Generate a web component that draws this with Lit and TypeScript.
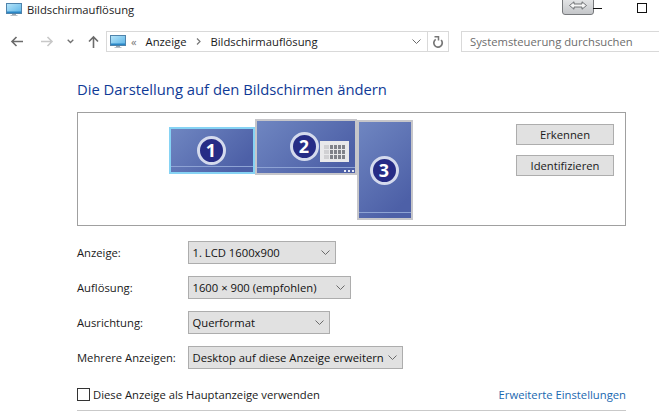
import { LitElement, html, css, svg } from "lit";
import { customElement } from "lit/decorators.js";

const monitorIcon = svg`<svg class="pc" width="16" height="14" viewBox="0 0 16 14">
  <defs><linearGradient id="scr" x1="0" y1="0" x2="1" y2="1"><stop offset="0" stop-color="#b8e6fa"/><stop offset="1" stop-color="#58b2e6"/></linearGradient></defs>
  <rect x="0.5" y="0.5" width="15" height="10" fill="url(#scr)" stroke="#4f83ab"/>
  <rect x="1" y="8.5" width="14" height="1.5" fill="#2a86c6"/>
  <rect x="6" y="11" width="4" height="1" fill="#9aa6b1"/>
  <rect x="4.5" y="12" width="7" height="1" fill="#b8c0c8"/>
</svg>`;

const chevron = svg`<svg class="chev" width="9" height="5" viewBox="0 0 9 5"><path d="M0.5 0.5 L4.5 4.5 L8.5 0.5" fill="none" stroke="#6a6a6a" stroke-width="1"/></svg>`;

@customElement("app-root")
export class AppRoot extends LitElement {
  static styles = css`
    :host { display: block; width: 659px; height: 414px; overflow: hidden; position: relative; background: #fff; color: #1a1a1a; font-family: "Open Sans", "Noto Sans", sans-serif; font-size: 11.25px; }
    .title { height: 18px; padding: 0 0 0 6px; display: flex; align-items: center; gap: 5px; color: #222; }
    .title .pc { display: block; margin-top: 1px; }
    .winbtns { position: absolute; left: 0; top: 0; width: 659px; height: 18px; pointer-events: none; }
    .resize { position: absolute; left: 562px; top: -4px; width: 30px; height: 17px; border: 1px solid #77797c; border-radius: 3px; background: linear-gradient(#e9eaeb, #c4c6c9); display: flex; align-items: center; justify-content: center; }
    .min { position: absolute; left: 593px; top: 8px; width: 9px; height: 1px; background: #111; }
    .max { position: absolute; left: 637px; top: 3px; width: 8px; height: 8px; border: 1px solid #111; }

    .toolbar { margin-top: 13px; height: 21px; display: flex; align-items: center; }
    .nav { width: 106px; flex: none; height: 21px; position: relative; }
    .nav svg { position: absolute; }
    .addr { width: 343px; height: 21px; box-sizing: border-box; border: 1px solid #d9d9d9; display: flex; align-items: center; flex: none; }
    .addr .pc { margin-left: 3px; margin-top: 1px; }
    .crumbs { margin-left: 5px; flex: 1; display: flex; align-items: center; color: #1a1a1a; }
    .raquo { color: #777; margin-right: 9px; }
    .sep { margin: 0 9px 0 10px; display: flex; align-items: center; }
    .addr-end { width: 30px; display: flex; align-items: center; justify-content: flex-end; padding-right: 6px; box-sizing: border-box; }
    .refresh { width: 20px; height: 19px; border-left: 1px solid #d9d9d9; display: flex; align-items: center; justify-content: center; }
    .search { margin-left: 12px; flex: 1; height: 21px; box-sizing: border-box; border: 1px solid #d9d9d9; border-right: none; padding-left: 8px; display: flex; align-items: center; color: #6d6d6d; }

    .content { padding: 0 33px 0 77px; }
    h1 { margin: 27px 0 0; font-weight: 400; font-size: 14.8px; line-height: 20px; color: #0f3a96; }
    .preview { margin-top: 13px; height: 114px; box-sizing: border-box; border: 1px solid #a0a0a0; position: relative; }
    .mon { position: absolute; box-sizing: border-box; background: linear-gradient(135deg, #6f86c1, #4d60a7 85%); border: 2px solid #c6c6ca; }
    .mon::after { content: ""; position: absolute; left: 0; right: 0; height: 1px; bottom: 5px; background: #8ea3d4; }
    .m1 { left: 91px; top: 14px; width: 86px; height: 47px; border-color: #86d3f4; }
    .m2 { left: 177px; top: 6px; width: 102px; height: 56px; }
    .m3 { left: 279px; top: 7px; width: 56px; height: 100px; }
    .badge { position: absolute; width: 29px; height: 29px; box-sizing: border-box; border-radius: 50%; border: 3px solid #d4daed; background: #262c86; color: #fff; font-size: 18px; font-weight: 700; display: flex; align-items: center; justify-content: center; line-height: 1; }
    .m1 .badge { left: 25.5px; top: 6.5px; }
    .m2 .badge { left: 32.5px; top: 10.5px; }
    .m3 .badge { left: 10.5px; top: 33.5px; }
    .grid { position: absolute; left: 63px; top: 20px; width: 29px; height: 21px; background: #e9e9eb; display: grid; grid-template-columns: 5px repeat(4, 3px); grid-auto-rows: 4px; gap: 1px; align-content: center; justify-content: center; }
    .grid i { background: #808289; display: block; }
    .grid i.l { background: #d0d0d3; }
    .dots { position: absolute; right: 1px; bottom: 1px; display: flex; gap: 2px; }
    .dots i { width: 2px; height: 2px; background: #e8ecf6; display: block; }
    .btns { position: absolute; left: 438px; top: 11px; display: flex; flex-direction: column; gap: 10px; }
    .btn { width: 98px; height: 21px; box-sizing: border-box; background: #e1e1e1; border: 1px solid #adadad; display: flex; align-items: center; justify-content: center; color: #1a1a1a; }

    .rows { margin-top: 15px; display: flex; flex-direction: column; gap: 12px; }
    .row { display: flex; align-items: center; height: 23px; }
    .row label { width: 111px; flex: none; color: #1a1a1a; }
    .sel { height: 23px; box-sizing: border-box; background: #e1e1e1; border: 1px solid #adadad; display: flex; align-items: center; justify-content: space-between; padding: 0 5px 0 3.5px; color: #111; }
    .foot { margin-top: 17px; height: 16px; display: flex; align-items: center; justify-content: space-between; }
    .check { display: flex; align-items: center; gap: 3px; color: #1a1a1a; }
    .box { width: 13px; height: 13px; box-sizing: border-box; border: 1px solid #333; }
    a { color: #1a68b0; text-decoration: none; }
    .rule { margin-top: 8px; height: 1px; background: #c9c9c9; }
  `;

  private gridCells() {
    const out = [];
    for (let r = 0; r < 3; r++) {
      out.push(html`<i class="l"></i>`);
      for (let c = 0; c < 4; c++) out.push(html`<i></i>`);
    }
    return out;
  }

  render() {
    return html`
      <div class="title">${monitorIcon}<span>Bildschirmauflösung</span></div>
      <div class="winbtns">
        <div class="resize"><svg width="18" height="9" viewBox="0 0 18 9"><path d="M0.5 4.5 L5 0.8 V3 H13 V0.8 L17.5 4.5 L13 8.2 V6 H5 V8.2 Z" fill="#f5f5f5" stroke="#55585c" stroke-width="0.8"/></svg></div>
        <div class="min"></div><div class="max"></div>
      </div>
      <div class="toolbar">
        <div class="nav">
          <svg style="left:10px;top:4px" width="14" height="13" viewBox="0 0 14 13"><path d="M13 6.5 H2 M6.5 2 L2 6.5 L6.5 11" fill="none" stroke="#6b6b6b" stroke-width="1.6"/></svg>
          <svg style="left:40px;top:4px" width="14" height="13" viewBox="0 0 14 13"><path d="M1 6.5 H12 M7.5 2 L12 6.5 L7.5 11" fill="none" stroke="#c8c8c8" stroke-width="1.6"/></svg>
          <svg style="left:67px;top:8px" width="7" height="5" viewBox="0 0 7 5"><path d="M0.7 0.7 L3.5 3.5 L6.3 0.7" fill="none" stroke="#707070" stroke-width="1.3"/></svg>
          <svg style="left:87px;top:4px" width="13" height="14" viewBox="0 0 13 14"><path d="M6.5 13 V2 M2 6.5 L6.5 2 L11 6.5" fill="none" stroke="#6b6b6b" stroke-width="1.6"/></svg>
        </div>
        <div class="addr">
          ${monitorIcon}
          <div class="crumbs">
            <span class="raquo">«</span><span>Anzeige</span>
            <span class="sep"><svg width="5" height="7" viewBox="0 0 5 7"><path d="M1 0.5 L4 3.5 L1 6.5" fill="none" stroke="#777" stroke-width="1.2"/></svg></span>
            <span>Bildschirmauflösung</span>
          </div>
          <div class="addr-end">${chevron}</div>
          <div class="refresh"><svg width="11" height="12" viewBox="0 0 11 12"><path d="M3.2 2.4 A4.2 4.2 0 1 0 8.6 3" fill="none" stroke="#777" stroke-width="1.7" transform="translate(-0.5 1)"/><path d="M1.5 0.8 L5.5 0.8 L5.5 4.5" fill="none" stroke="#777" stroke-width="1.5"/></svg></div>
        </div>
        <div class="search">Systemsteuerung durchsuchen</div>
      </div>
      <div class="content">
        <h1>Die Darstellung auf den Bildschirmen ändern</h1>
        <div class="preview">
          <div class="mon m1"><div class="badge">1</div></div>
          <div class="mon m2">
            <div class="badge">2</div>
            <div class="grid">${this.gridCells()}</div>
            <div class="dots"><i></i><i></i><i></i></div>
          </div>
          <div class="mon m3"><div class="badge">3</div></div>
          <div class="btns"><div class="btn">Erkennen</div><div class="btn">Identifizieren</div></div>
        </div>
        <div class="rows">
          <div class="row"><label>Anzeige:</label><div class="sel" style="width:148px"><span>1. LCD 1600x900</span>${chevron}</div></div>
          <div class="row"><label>Auflösung:</label><div class="sel" style="width:163px"><span>1600 × 900 (empfohlen)</span>${chevron}</div></div>
          <div class="row"><label>Ausrichtung:</label><div class="sel" style="width:142px"><span>Querformat</span>${chevron}</div></div>
          <div class="row"><label>Mehrere Anzeigen:</label><div class="sel" style="width:215px"><span>Desktop auf diese Anzeige erweitern</span>${chevron}</div></div>
        </div>
        <div class="foot">
          <div class="check"><div class="box"></div><span>Diese Anzeige als Hauptanzeige verwenden</span></div>
          <a>Erweiterte Einstellungen</a>
        </div>
        <div class="rule"></div>
      </div>
    `;
  }
}
